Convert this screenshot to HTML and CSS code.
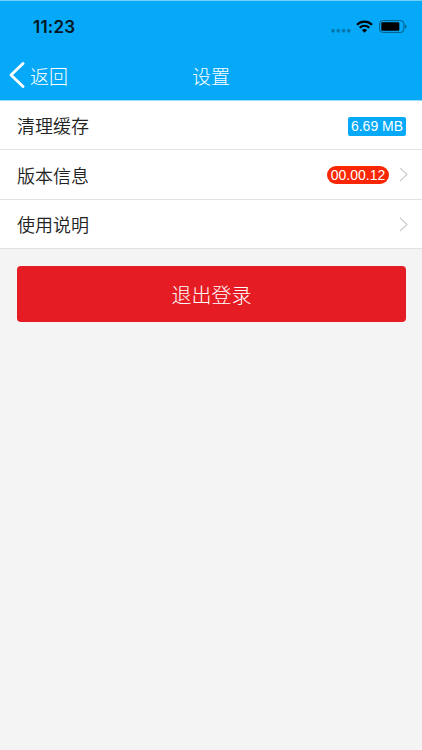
FILE: index.html
```html
<!DOCTYPE html>
<html lang="zh-CN">
<head>
  <meta charset="UTF-8">
  <meta name="viewport" content="width=device-width, initial-scale=1.0">
  <title>设置</title>
  <link rel="stylesheet" href="styles.css">
</head>
<body>
  <!-- Header -->
  <header class="header">
    <div class="status-bar">
      <span class="time">11:23</span>
      <div class="status-icons">
        <svg class="signal" width="20" height="4" viewBox="0 0 20 4">
          <rect x="0.3" y="0" width="3.4" height="3.4" rx="1"/>
          <rect x="5.5" y="0" width="3.4" height="3.4" rx="1"/>
          <rect x="10.8" y="0" width="3.4" height="3.4" rx="1"/>
          <rect x="16" y="0" width="3.4" height="3.4" rx="1"/>
        </svg>
        <svg class="wifi" width="17" height="13" viewBox="0 0 17 13">
          <path d="M1 4.7a10.8 10.8 0 0 1 15 0M3.7 7.7a6.9 6.9 0 0 1 9.6 0" fill="none" stroke="#000" stroke-width="2.2"/>
          <path d="M5.9 10.1a3.8 3.8 0 0 1 5.2 0L8.5 12.7z"/>
        </svg>
        <svg class="battery" width="28" height="13" viewBox="0 0 28 13">
          <rect x="0.6" y="0.6" width="24.3" height="11.8" rx="3.2" fill="none" stroke="#000" stroke-opacity="0.45"/>
          <rect x="2.3" y="2.3" width="18" height="8.4" rx="1.2"/>
          <path d="M26.1 4.4c1.8.7 1.8 3.5 0 4.2z" fill-opacity="0.5"/>
        </svg>
      </div>
    </div>
    <div class="nav-bar">
      <a class="back">
        <svg width="16" height="26" viewBox="0 0 16 26">
          <path d="M14 1.5L2 13l12 11.5" fill="none" stroke="#fff" stroke-width="2.8" stroke-linecap="round" stroke-linejoin="round"/>
        </svg>
        <span>返回</span>
      </a>
      <h1 class="title">设置</h1>
    </div>
  </header>

  <!-- Settings list -->
  <ul class="list">
    <li class="item">
      <span>清理缓存</span>
      <span class="badge cache">6.69 MB</span>
    </li>
    <li class="item">
      <span>版本信息</span>
      <span class="badge version">00.00.12</span>
      <svg class="arrow" width="9" height="15" viewBox="0 0 9 15">
        <path d="M1 0.8l7 6.7-7 6.7"/>
      </svg>
    </li>
    <li class="item">
      <span>使用说明</span>
      <svg class="arrow" width="9" height="15" viewBox="0 0 9 15">
        <path d="M1 0.8l7 6.7-7 6.7"/>
      </svg>
    </li>
  </ul>

  <button class="logout">退出登录</button>
</body>
</html>
```
FILE: styles.css
```css
body {
  margin: 0;
  min-height: 100vh;
  background-color: #f4f4f4;
  font-family: "Liberation Sans", "Noto Sans CJK SC", sans-serif;
  color: #222;
}

/* Header */
.header {
  box-sizing: border-box;
  height: 101px;
  background-color: #06a9f7;
  border-top: 1px solid #6ed3f7;
  border-bottom: 1px solid #9bdcf8;
}

.status-bar {
  display: flex;
  justify-content: space-between;
  height: 50px;
  padding: 0 15px 0 33px;
}

.time {
  margin-top: 16px;
  font-family: Inter, sans-serif;
  font-size: 17px;
  font-weight: 600;
  letter-spacing: 0.2px;
  line-height: 21px;
  color: #051522;
}

.status-icons {
  display: flex;
  height: 13px;
  margin-top: 19px;
}

.signal {
  margin: 9px 5px 0 0;
  opacity: 0.28;
}

.wifi {
  margin-right: 6px;
}

.nav-bar {
  display: grid;
  grid-template-columns: 1fr auto 1fr;
  align-items: center;
  height: 48px;
  color: #fff;
  font-size: 19px;
  font-weight: 300;
}

.back {
  display: flex;
  align-items: center;
  gap: 5px;
  padding-left: 9px;
}

.title {
  margin: 0;
  font-size: 19px;
  font-weight: 300;
}

/* List */
.list {
  margin: 0;
  padding: 0;
  list-style: none;
  background-color: #fff;
}

.item {
  display: flex;
  align-items: center;
  box-sizing: border-box;
  height: 49px;
  padding: 0 14px 0 17px;
  border-bottom: 1px solid #e2e2e2;
  font-size: 18px;
  font-weight: 350;
}

.item:nth-child(2) {
  height: 50px;
}

.badge {
  margin-left: auto;
  color: #fff;
  font-size: 14px;
  text-align: center;
}

.cache {
  width: 58px;
  height: 19px;
  margin-top: 2px;
  margin-right: 2px;
  border-radius: 2px;
  background-color: #06a9f7;
  line-height: 18px;
}

.version {
  width: 62px;
  height: 18px;
  margin-right: 10px;
  border-radius: 9px;
  background-color: #fb2704;
  line-height: 18px;
}

.arrow {
  margin-left: auto;
  fill: none;
  stroke: #c8c8cc;
  stroke-width: 1.1;
}

.badge + .arrow {
  margin-left: 0;
}

/* Logout */
.logout {
  display: block;
  width: 389px;
  height: 56px;
  margin: 17px 0 0 17px;
  padding: 0;
  border: none;
  border-radius: 4px;
  background-color: #e61c24;
  color: #fff;
  font-family: inherit;
  font-size: 20px;
  font-weight: 300;
}
```
